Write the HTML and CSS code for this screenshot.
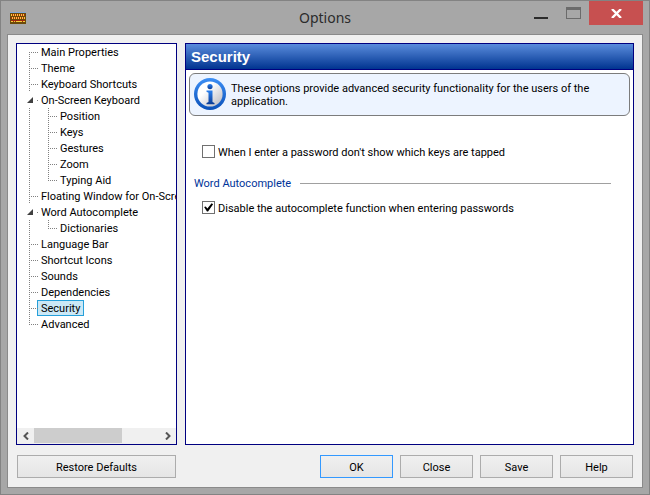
FILE: index.html
```html
<!DOCTYPE html>
<html lang="en">
<head>
    <meta charset="UTF-8">
    <meta name="viewport" content="width=device-width, initial-scale=1.0">
    <title>Options</title>
    <link rel="stylesheet" href="styles.css">
</head>
<body>
    <div class="window">
        <header class="titlebar">
            <svg class="app-icon" width="16" height="12" viewBox="0 0 16 12" shape-rendering="crispEdges">
                <rect width="16" height="1" fill="#7fa6d8"/>
                <rect y="1" width="16" height="11" fill="#6b4a0a"/>
                <path d="M1 2.5h14M1 3.5h14M1 5.5h14M1 6.5h14M1 8.5h14M1 9.5h14" stroke="#a02a10"/>
                <path d="M1 3h14M2 6h13" stroke="#f8cf3a" stroke-width="2" stroke-dasharray="1 1"/>
                <path d="M1 9.5h2M4 9.5h1M6 9.5h6M13 9.5h2" stroke="#f8cf3a"/>
            </svg>
            <h1 class="title">Options</h1>
            <div class="window-controls">
                <button class="control" aria-label="Minimize">
                    <svg width="14" height="12" viewBox="0 0 14 12"><rect y="10" width="14" height="2" fill="#2b2b2b"/></svg>
                </button>
                <button class="control" aria-label="Maximize">
                    <svg width="15" height="12" viewBox="0 0 15 12"><path d="M0 0h15v12H0zM1 3v8h13V3z" fill="#6b6b6b" fill-rule="evenodd"/></svg>
                </button>
                <button class="control control-close" aria-label="Close window">
                    <svg width="11" height="9" viewBox="0 0 11 9"><path d="M1 0L10 9M10 0L1 9" stroke="#fff" stroke-width="2.4"/></svg>
                </button>
            </div>
        </header>

        <main class="client">
            <div class="panels">
                <nav class="sidebar">
                    <ul class="tree">
                        <li><a href="#main">Main Properties</a></li>
                        <li><a href="#theme">Theme</a></li>
                        <li><a href="#shortcuts">Keyboard Shortcuts</a></li>
                        <li class="open">
                            <a href="#keyboard">On-Screen Keyboard</a>
                            <ul>
                                <li><a href="#position">Position</a></li>
                                <li><a href="#keys">Keys</a></li>
                                <li><a href="#gestures">Gestures</a></li>
                                <li><a href="#zoom">Zoom</a></li>
                                <li><a href="#typing">Typing Aid</a></li>
                            </ul>
                        </li>
                        <li><a href="#floating">Floating Window for On-Scre</a></li>
                        <li class="open">
                            <a href="#autocomplete">Word Autocomplete</a>
                            <ul>
                                <li><a href="#dictionaries">Dictionaries</a></li>
                            </ul>
                        </li>
                        <li><a href="#language">Language Bar</a></li>
                        <li><a href="#icons">Shortcut Icons</a></li>
                        <li><a href="#sounds">Sounds</a></li>
                        <li><a href="#dependencies">Dependencies</a></li>
                        <li><a href="#security" class="selected">Security</a></li>
                        <li><a href="#advanced">Advanced</a></li>
                    </ul>
                    <div class="scrollbar">
                        <button class="scroll-btn" aria-label="Scroll left">
                            <svg width="6" height="8" viewBox="0 0 6 8"><path d="M5 0.5L1.5 4L5 7.5" fill="none" stroke="#555" stroke-width="2"/></svg>
                        </button>
                        <div class="scroll-track"><div class="scroll-thumb"></div></div>
                        <button class="scroll-btn" aria-label="Scroll right">
                            <svg width="6" height="8" viewBox="0 0 6 8"><path d="M1 0.5L4.5 4L1 7.5" fill="none" stroke="#555" stroke-width="2"/></svg>
                        </button>
                    </div>
                </nav>

                <section class="page">
                    <h2 class="page-title">Security</h2>
                    <div class="info">
                        <svg class="info-icon" width="32" height="32" viewBox="0 0 32 32">
                            <defs>
                                <linearGradient id="ring" x1="0" y1="0" x2="0" y2="1">
                                    <stop offset="0" stop-color="#3d8ff5"/>
                                    <stop offset="1" stop-color="#0a50b8"/>
                                </linearGradient>
                                <linearGradient id="disc" x1="0" y1="0" x2="1" y2="1">
                                    <stop offset="0.35" stop-color="#ffffff"/>
                                    <stop offset="1" stop-color="#b4b4bc"/>
                                </linearGradient>
                                <linearGradient id="letter" x1="0" y1="0" x2="0" y2="1">
                                    <stop offset="0" stop-color="#2a80ee"/>
                                    <stop offset="1" stop-color="#0a3c96"/>
                                </linearGradient>
                            </defs>
                            <circle cx="16" cy="16" r="16" fill="url(#ring)"/>
                            <circle cx="16" cy="16" r="12.6" fill="url(#disc)"/>
                            <circle cx="16" cy="8.6" r="2.6" fill="url(#letter)"/>
                            <path d="M12.5 12.500h6v11.500l2 1v1.200h-8V25l2-1V14.800l-2-1z" fill="url(#letter)"/>
                        </svg>
                        <p>These options provide advanced security functionality for the users of the application.</p>
                    </div>
                    <div class="options">
                        <label class="option"><input type="checkbox">When I enter a password don't show which keys are tapped</label>
                        <fieldset class="group">
                            <legend class="group-title">Word Autocomplete</legend>
                            <label class="option"><input type="checkbox" checked>Disable the autocomplete function when entering passwords</label>
                        </fieldset>
                    </div>
                </section>
            </div>

            <footer class="buttons">
                <button class="btn btn-restore">Restore Defaults</button>
                <button class="btn btn-default">OK</button>
                <button class="btn">Close</button>
                <button class="btn">Save</button>
                <button class="btn">Help</button>
            </footer>
        </main>
    </div>
</body>
</html>
```
FILE: styles.css
```css
* {
    box-sizing: border-box;
}

body {
    margin: 0;
    font-family: Roboto, Tahoma, sans-serif;
    font-size: 11px;
    line-height: 13px;
    color: #000;
}

button {
    margin: 0;
    padding: 0;
    border: none;
    background: none;
    font: inherit;
    color: inherit;
}

svg {
    display: block;
}

ul {
    list-style: none;
    margin: 0;
    padding: 0;
}

.window {
    display: flex;
    flex-direction: column;
    min-height: 100vh;
    padding: 0 6px 6px;
    border: 1px solid #838383;
    background: #a7a7a7;
}

/* Title bar */
.titlebar {
    display: grid;
    grid-template-columns: 1fr auto 1fr;
    align-items: center;
    height: 33px;
}

.app-icon {
    margin-left: 3px;
}

.title {
    margin: 0;
    font-family: "Noto Sans", sans-serif;
    font-size: 14px;
    line-height: 20px;
    font-weight: 400;
    color: #2b2b2b;
}

.window-controls {
    display: flex;
    align-self: start;
    justify-content: flex-end;
}

.control {
    display: flex;
    align-items: center;
    justify-content: center;
    width: 32px;
    height: 24px;
}

.control-close {
    width: 54px;
    background: #c75050;
}

/* Client area */
.client {
    flex: 1;
    display: flex;
    flex-direction: column;
    gap: 10px;
    padding: 8px 8px 9px;
    border: 1px solid #8a8a8a;
    background: #f0f0f0;
}

.panels {
    flex: 1;
    display: flex;
    gap: 8px;
}

.sidebar {
    display: flex;
    flex-direction: column;
    justify-content: space-between;
    width: 161px;
    border: 1px solid #000080;
    background: #fff;
    overflow: hidden;
}

/* Tree */
.tree {
    padding-left: 12px;
}

.tree ul {
    padding-left: 19px;
}

.tree li {
    position: relative;
    white-space: nowrap;
}

.tree a {
    display: block;
    width: max-content;
    height: 16px;
    margin-left: 8px;
    padding: 0 4px;
    line-height: 18px;
    color: inherit;
    text-decoration: none;
}

.tree .selected {
    padding: 0 3px;
    border: 1px solid #26a0da;
    background: #cbe8f6;
    line-height: 16px;
}

/* dotted connector lines */
.tree li::before {
    content: "";
    position: absolute;
    top: 8px;
    left: 0;
    width: 9px;
    height: 1px;
    background: repeating-linear-gradient(90deg, #808080 0 1px, transparent 1px 2px);
}

.tree li::after {
    content: "";
    position: absolute;
    top: 0;
    bottom: 0;
    left: 0;
    width: 1px;
    background: repeating-linear-gradient(#808080 0 1px, transparent 1px 2px);
}

.tree > li:first-child::after {
    top: 8px;
}

.tree li:last-child::after {
    bottom: auto;
    height: 8px;
}

.tree .open::before {
    left: 8px;
    width: 1px;
}

.tree .open::after {
    top: 16px;
}

.tree .open > a::before {
    content: "";
    position: absolute;
    top: 5px;
    left: -2px;
    width: 6px;
    height: 6px;
    background: #404040;
    clip-path: polygon(100% 0, 100% 100%, 0 100%);
}

/* Scroll bar */
.scrollbar {
    display: flex;
    height: 16px;
    background: #f0f0f0;
}

.scroll-btn {
    display: flex;
    align-items: center;
    justify-content: center;
    width: 17px;
}

.scroll-track {
    flex: 1;
}

.scroll-thumb {
    width: 70%;
    height: 15px;
    background: #cdcdcd;
}

/* Options page */
.page {
    flex: 1;
    border: 1px solid #000080;
    background: #fff;
}

.page-title {
    margin: 0;
    padding: 0 5px;
    border-bottom: 1px solid #000080;
    background: linear-gradient(#5a8cdc, #003490);
    font-family: "Liberation Sans", Arial, sans-serif;
    font-size: 15px;
    line-height: 25px;
    font-weight: 700;
    color: #fff;
}

.info {
    display: flex;
    gap: 5px;
    margin: 3px;
    padding: 4px 4px 5px;
    border: 1px solid #7c7c7c;
    border-radius: 6px;
    background: #edf4ff;
}

.info-icon {
    flex: none;
}

.info p {
    margin: 0;
    padding-top: 4px;
    padding-right: 24px;
}

.options {
    display: flex;
    flex-direction: column;
    gap: 19px;
    padding: 26px 22px 8px 8px;
}

.option {
    display: flex;
    gap: 3px;
    height: 13px;
    margin-left: 8px;
    line-height: 15px;
}

.option input {
    appearance: none;
    flex: none;
    width: 13px;
    height: 13px;
    margin: 0;
    border: 1px solid #707070;
    background: #fff;
}

.option input:checked::before {
    content: "";
    display: block;
    width: 11px;
    height: 11px;
    background: #000;
    clip-path: polygon(10% 45%, 25% 40%, 40% 60%, 78% 12%, 92% 20%, 46% 86%, 36% 86%);
}

.group {
    margin: 0;
    padding: 0;
    border: none;
}

.group-title {
    display: flex;
    align-items: center;
    gap: 9px;
    width: 100%;
    margin-bottom: 11px;
    padding: 0;
    color: #003399;
}

.group-title::after {
    content: "";
    flex: 1;
    height: 1px;
    background: #a0a0a0;
}

/* Bottom buttons */
.buttons {
    display: flex;
    gap: 7px;
    padding: 0 1px;
}

.btn {
    width: 73px;
    height: 23px;
    padding-top: 1px;
    border: 1px solid #acacac;
    background: linear-gradient(#f0f0f0, #e5e5e5);
}

.btn-restore {
    width: 159px;
    margin-right: auto;
}

.btn-default {
    border-color: #3399ff;
}
```
